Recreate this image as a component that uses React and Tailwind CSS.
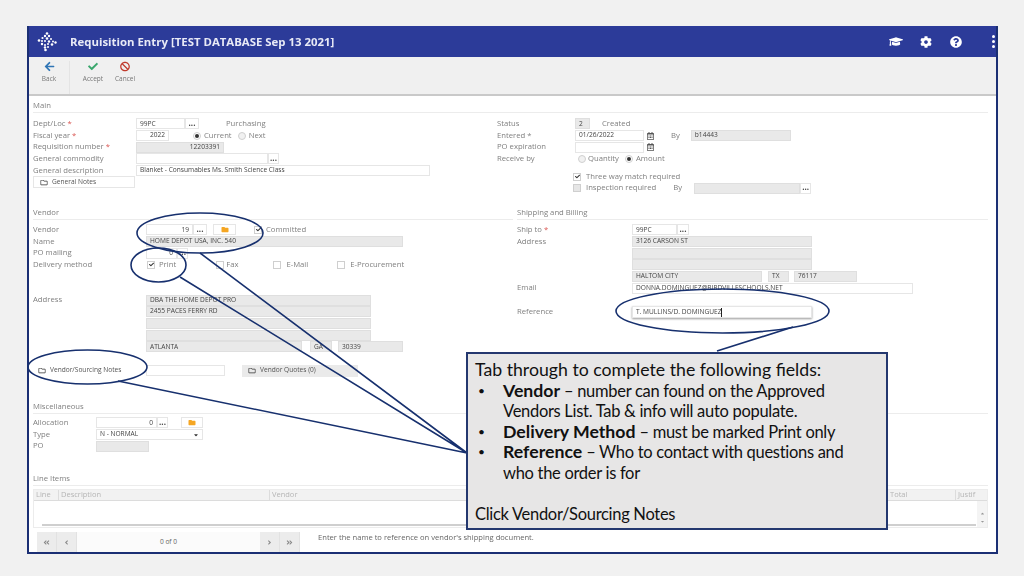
import React from "react";
import { FaArrowLeft, FaCheck, FaBan, FaGraduationCap, FaCog, FaQuestionCircle, FaFolder, FaRegFolder, FaRegCalendarAlt, FaAngleDoubleLeft, FaAngleLeft, FaAngleRight, FaAngleDoubleRight, FaCaretDown, FaCaretUp } from "react-icons/fa";

const Row = ({ children, className = "" }) => (
  <div className={"flex items-center h-[11.7px] text-[7.7px] leading-none text-[#808080] whitespace-nowrap " + className}>{children}</div>
);
const Star = () => <span className="text-[#d9534f]"> *</span>;
const box = "h-[11px] flex items-center px-[3px] text-[6.6px] leading-none text-[#444] shrink-0 overflow-hidden ";
const Inp = ({ className = "", children }) => <div className={box + "bg-white border border-[#e6e6e6] " + className}>{children}</div>;
const Gray = ({ className = "", children }) => <div className={box + "bg-[#e9e9e9] border border-[#dfdfdf] " + className}>{children}</div>;
const Dots = ({ className = "" }) => <div className={"h-[11px] flex items-center justify-center border border-[#e6e6e6] bg-white text-[8px] font-bold leading-none text-[#444] shrink-0 " + className}><span className="-mt-[2px]">...</span></div>;
const Radio = ({ on, className = "" }) => (
  <span className={"w-[8px] h-[8px] rounded-full border border-[#cfcfcf] flex items-center justify-center shrink-0 " + (on ? "bg-white " : "bg-[#f1f1f1] ") + className}>
    {on && <span className="w-[4px] h-[4px] rounded-full bg-[#333]" />}
  </span>
);
const Check = ({ on, dim, className = "" }) => (
  <span className={"w-[8px] h-[8px] border border-[#cfcfcf] flex items-center justify-center shrink-0 " + (dim ? "bg-[#e6e6e6] " : "bg-white ") + className}>
    {on && <FaCheck className="text-[#333] w-[5px] h-[5px]" />}
  </span>
);
const Heading = ({ children, className = "" }) => (
  <div className={"text-[7.7px] leading-[8px] text-[#808080] pb-[3px] border-b border-[#ececec] " + className}>{children}</div>
);
const Cal = () => <FaRegCalendarAlt className="w-[7px] h-[8px] text-[#555] ml-[3px] shrink-0" />;
const NoteBtn = ({ children, className = "" }) => (
  <div className={"h-[12px] flex items-center gap-[4px] pl-[6px] text-[6.6px] leading-none text-[#555] shrink-0 " + className}>
    <FaRegFolder className="w-[8px] h-[7px] text-[#333]" />{children}
  </div>
);

const Logo = () => (
  <svg width="20" height="20" viewBox="0 0 20 20" fill="white" className="ml-[8px]">
    {[[10,1.5,1.3],[8,4,1.2],[12,4,1.2],[5.5,6,1.1],[10,6.5,1.3],[14,7,1],[2,8.5,1.3],[5,9,1],[8,9,1],[12,9.5,1.2],[16,9.5,1],[18.5,10.5,1.2],[5,12,1.2],[8,13,1],[11,12,1],[15,12.5,1.3],[8,15.5,1.2],[11,15,1],[8.5,18,1.3]].map(([x, y, r], i) => (
      <circle key={i} cx={x} cy={y} r={r} />
    ))}
  </svg>
);

const Tool = ({ icon, label, className = "" }) => (
  <div className={"flex flex-col items-center gap-[4px] text-[6.5px] leading-none text-[#777] " + className}>
    {icon}<span>{label}</span>
  </div>
);

const Pg = ({ children }) => (
  <div className="w-[20px] h-full bg-[#ececec] border-r border-[#e2e2e2] flex items-center justify-center text-[#888] shrink-0">{children}</div>
);

const Bullet = () => <span className="w-[28px] pl-[3px] shrink-0 text-[12px]">•</span>;

export default function App() {
  return (
    <div className="relative w-[1024px] h-[576px] overflow-hidden bg-[#f1f1f1] pt-[26px] pl-[27px] font-['Open_Sans',sans-serif]">
      <div className="w-[971px] h-[528px] border-x-2 border-b-2 border-[#1b2f74] bg-white flex flex-col overflow-hidden">
        <div className="h-[31px] bg-[#2c3b99] flex items-center shrink-0 text-white blur-[0.3px]">
          <Logo />
          <span className="ml-[13px] text-[11.4px] font-bold leading-none text-[#e8eaf6]">Requisition Entry [TEST DATABASE Sep 13 2021]</span>
          <FaGraduationCap className="ml-auto w-[14px] h-[13px]" />
          <FaCog className="ml-[17px] w-[12px] h-[12px]" />
          <FaQuestionCircle className="ml-[18px] w-[12px] h-[12px]" />
          <div className="ml-[30px] mr-[1px] flex flex-col gap-[2px]">
            <span className="w-[3px] h-[3px] rounded-full bg-white" />
            <span className="w-[3px] h-[3px] rounded-full bg-white" />
            <span className="w-[3px] h-[3px] rounded-full bg-white" />
          </div>
        </div>
        <div className="h-[39px] shrink-0 bg-[#f0f0f0] border-b-2 border-[#c9c9c9] flex items-start pt-[4px] blur-[0.3px]">
          <Tool label="Back" className="w-[40px]" icon={<FaArrowLeft className="w-[11px] h-[11px] text-[#2f75b5]" />} />
          <div className="w-px h-[33px] bg-[#e4e4e4]" />
          <Tool label="Accept" className="w-[32px] ml-[7px]" icon={<FaCheck className="w-[10px] h-[11px] text-[#3aa76d]" />} />
          <Tool label="Cancel" className="w-[32px]" icon={<FaBan className="w-[10px] h-[11px] text-[#c0392b]" />} />
        </div>

        <div className="flex-1 min-h-0 flex flex-col pl-[4px] pr-[8px] pt-[5px] blur-[0.3px]">
          <Heading>Main</Heading>
          <div className="flex mt-[5px] h-[80px] shrink-0">
            <div className="w-[464px] shrink-0">
              <Row><span className="w-[103px]">Dept/Loc<Star /></span><Inp className="w-[49px]">99PC</Inp><Dots className="w-[14px]" /><span className="ml-[27px]">Purchasing</span></Row>
              <Row><span className="w-[103px]">Fiscal year<Star /></span><Inp className="w-[33px] justify-end">2022</Inp><Radio on className="ml-[24px]" /><span className="ml-[3px]">Current</span><Radio className="ml-[6px]" /><span className="ml-[3px]">Next</span></Row>
              <Row><span className="w-[103px]">Requisition number<Star /></span><Gray className="w-[88px] justify-end">12203391</Gray></Row>
              <Row><span className="w-[103px]">General commodity</span><Inp className="w-[132px]" /><Dots className="w-[11px]" /></Row>
              <Row><span className="w-[103px]">General description</span><Inp className="w-[294px]">Blanket - Consumables Ms. Smith Science Class</Inp></Row>
              <Row><NoteBtn className="w-[102px] bg-white border border-[#e6e6e6]">General Notes</NoteBtn></Row>
            </div>
            <div className="flex-1">
              <Row><span className="w-[78px]">Status</span><Gray className="w-[15px]">2</Gray><span className="ml-[12px]">Created</span></Row>
              <Row><span className="w-[78px]">Entered *</span><Inp className="w-[69px]">01/26/2022</Inp><Cal /><span className="ml-[17px]">By</span><Gray className="w-[100px] ml-[11px]">b14443</Gray></Row>
              <Row><span className="w-[78px]">PO expiration</span><Inp className="w-[69px]" /><Cal /></Row>
              <Row><span className="w-[78px]">Receive by</span><Radio className="ml-[3px]" /><span className="ml-[2px]">Quantity</span><Radio on className="ml-[6px]" /><span className="ml-[3px]">Amount</span></Row>
              <div className="h-[6px]" />
              <Row><Check on className="ml-[76px]" /><span className="ml-[5px]">Three way match required</span></Row>
              <Row><Check dim className="ml-[76px]" /><span className="ml-[5px]">Inspection required</span><span className="ml-[17px]">By</span><Gray className="w-[106px] ml-[12px]" /><Dots className="w-[11px]" /></Row>
            </div>
          </div>

          <div className="flex mt-[10px] h-[157px] shrink-0">
            <div className="w-[484px] shrink-0">
              <Heading className="mr-[4px]">Vendor</Heading>
              <div className="mt-[4px]">
                <Row><span className="w-[113px]">Vendor</span><Inp className="w-[47px] justify-end">19</Inp><Dots className="w-[14px]" /><div className="w-[23px] h-[11px] ml-[6px] border border-[#e6e6e6] flex items-center justify-center"><FaFolder className="w-[8px] h-[7px] text-[#f5a623]" /></div><Check on className="ml-[18px]" /><span className="ml-[4px]">Committed</span></Row>
                <Row><span className="w-[113px]">Name</span><Gray className="w-[257px]">HOME DEPOT USA, INC. 540</Gray></Row>
                <Row><span className="w-[113px]">PO mailing</span><Inp className="w-[31px] justify-end">0</Inp><Dots className="w-[11px]" /></Row>
                <Row><span className="w-[113px]">Delivery method</span><Check on className="ml-[1px]" /><span className="ml-[4px]">Print</span><Check className="ml-[40px]" /><span className="ml-[2px]">Fax</span><Check className="ml-[35px]" /><span className="ml-[5px]">E-Mail</span><Check className="ml-[29px]" /><span className="ml-[5px]">E-Procurement</span></Row>
                <div className="h-[23.5px]" />
                <Row><span className="w-[113px]">Address</span><Gray className="w-[225px]">DBA THE HOME DEPOT PRO</Gray></Row>
                <Row><span className="w-[113px]" /><Gray className="w-[225px]">2455 PACES FERRY RD</Gray></Row>
                <Row><span className="w-[113px]" /><Gray className="w-[225px]" /></Row>
                <Row><span className="w-[113px]" /><Gray className="w-[225px]" /></Row>
                <Row><span className="w-[113px]" /><Gray className="w-[156px]">ATLANTA</Gray><Gray className="w-[22px] ml-[8px]">GA</Gray><Gray className="w-[65px] ml-[6px]">30339</Gray></Row>
                <div className="h-[12px]" />
                <Row><NoteBtn className="w-[114px] -ml-px">Vendor/Sourcing Notes</NoteBtn><Inp className="w-[79px]" /><NoteBtn className="w-[116px] ml-[17px] bg-[#eaeaea]">Vendor Quotes (0)</NoteBtn></Row>
              </div>
            </div>
            <div className="flex-1">
              <Heading>Shipping and Billing</Heading>
              <div className="mt-[4px]">
                <Row><span className="w-[115px]">Ship to<Star /></span><Inp className="w-[45px]">99PC</Inp><Dots className="w-[12px]" /></Row>
                <Row><span className="w-[115px]">Address</span><Gray className="w-[180px]">3126 CARSON ST</Gray></Row>
                <Row><span className="w-[115px]" /><Gray className="w-[180px]" /></Row>
                <Row><span className="w-[115px]" /><Gray className="w-[180px]" /></Row>
                <Row><span className="w-[115px]" /><Gray className="w-[130px]">HALTOM CITY</Gray><Gray className="w-[21px] ml-[6px]">TX</Gray><Gray className="w-[63px] ml-[5px]">76117</Gray></Row>
                <Row><span className="w-[115px]">Email</span><Inp className="w-[281px]">DONNA.DOMINGUEZ@BIRDVILLESCHOOLS.NET</Inp></Row>
                <div className="h-[11.7px]" />
                <Row className="h-[13px]"><span className="w-[115px]">Reference</span><Inp className="w-[180px] h-[12px] border-[#777] shadow-[0_1px_2px_rgba(0,0,0,0.4)]">T. MULLINS/D. DOMINGUEZ<span className="w-px h-[9px] bg-[#222]" /></Inp></Row>
              </div>
            </div>
          </div>

          <Heading className="mt-[37px]">Miscellaneous</Heading>
          <div className="mt-[3px] h-[57px] shrink-0">
            <Row><span className="w-[63px]">Allocation</span><Inp className="w-[61px] justify-end">0</Inp><Dots className="w-[11px]" /><div className="w-[22px] h-[11px] ml-[13px] border border-[#e6e6e6] flex items-center justify-center"><FaFolder className="w-[8px] h-[7px] text-[#f5a623]" /></div></Row>
            <Row><span className="w-[63px]">Type</span><Inp className="w-[107px] justify-between">N - NORMAL<FaCaretDown className="w-[6px] h-[6px] text-[#333]" /></Inp></Row>
            <Row><span className="w-[63px]">PO</span><Gray className="w-[53px]" /></Row>
          </div>

          <Heading>Line Items</Heading>
          <div className="mt-[3px] h-[39px] shrink-0 border border-[#ececec] flex flex-col relative">
            <div className="h-[11px] bg-[#f2f2f2] border-b border-[#dcdcdc] flex text-[7.5px] leading-none text-[#b5b5b5] items-center">
              <span className="w-[25px] pl-[2px] border-r border-[#dcdcdc] h-full flex items-center">Line</span>
              <span className="w-[211px] pl-[2px] border-r border-[#dcdcdc] h-full flex items-center">Description</span>
              <span className="w-[618px] pl-[2px] border-r border-[#dcdcdc] h-full flex items-center">Vendor</span>
              <span className="w-[68px] pl-[2px] border-r border-[#dcdcdc] h-full flex items-center">Total</span>
              <span className="w-[21px] pl-[2px] overflow-hidden h-full flex items-center">Justif</span>
            </div>
            <div className="flex-1 relative">
              <div className="absolute left-[8px] right-[11px] bottom-[1px] h-[2px] bg-[#cfcfcf]" />
              <div className="absolute right-0 top-0 bottom-0 w-[10px] bg-[#f4f4f4] flex flex-col items-center justify-end pb-[3px] text-[#999]">
                <FaCaretUp className="w-[5px] h-[5px]" />
                <FaCaretDown className="w-[5px] h-[5px] mt-[3px]" />
              </div>
            </div>
          </div>

          <div className="flex mt-[4px] h-[20px] shrink-0">
            <div className="flex ml-[4px] h-full">
              <Pg><FaAngleDoubleLeft className="w-[7px] h-[7px]" /></Pg>
              <Pg><FaAngleLeft className="w-[7px] h-[7px]" /></Pg>
              <div className="w-[183px] bg-[#fbfbfb] flex items-center justify-center text-[6.6px] leading-none text-[#666666]"><span className="text-[#666666]">0 of 0</span></div>
              <Pg><FaAngleRight className="w-[7px] h-[7px]" /></Pg>
              <Pg><FaAngleDoubleRight className="w-[7px] h-[7px]" /></Pg>
            </div>
            <span className="ml-[18px] text-[7.6px] leading-[10px] text-[#666] whitespace-nowrap">Enter the name to reference on vendor's shipping document.</span>
          </div>
        </div>
      </div>

      <svg className="absolute left-0 top-0 pointer-events-none" width="1024" height="576" fill="none" stroke="#17306e" strokeWidth="1.6">
        <ellipse cx="200" cy="233" rx="63" ry="20" />
        <ellipse cx="158.5" cy="265" rx="27.5" ry="17" />
        <ellipse cx="87.5" cy="367" rx="59.5" ry="17" />
        <ellipse cx="722.5" cy="311" rx="106.5" ry="22" />
        <path d="M200 253 L467 453 M180 277 L467 453 M118 381 L467 453 M793 327 L717 351" />
      </svg>

      <div className="absolute left-[466px] top-[352px] w-[422px] h-[178px] bg-[#e7e6e6] border-2 border-[#24386f] pt-[6px] pl-[7px] font-['Lato',sans-serif] text-[16.5px] leading-[20.5px] tracking-[-0.3px] text-[#111] whitespace-nowrap">
        <div className="text-[17.7px] tracking-normal">Tab through to complete the following fields:</div>
        <div className="flex"><Bullet /><div><b className="text-[17.7px] tracking-normal">Vendor</b> – number can found on the Approved<br />Vendors List. Tab &amp; info will auto populate.</div></div>
        <div className="flex"><Bullet /><div><b className="text-[17.7px] tracking-normal">Delivery Method</b> – must be marked Print only</div></div>
        <div className="flex"><Bullet /><div><b className="text-[17.7px] tracking-normal">Reference</b> – Who to contact with questions and<br />who the order is for</div></div>
        <div className="mt-[20.5px]">Click Vendor/Sourcing Notes</div>
      </div>
    </div>
  );
}
